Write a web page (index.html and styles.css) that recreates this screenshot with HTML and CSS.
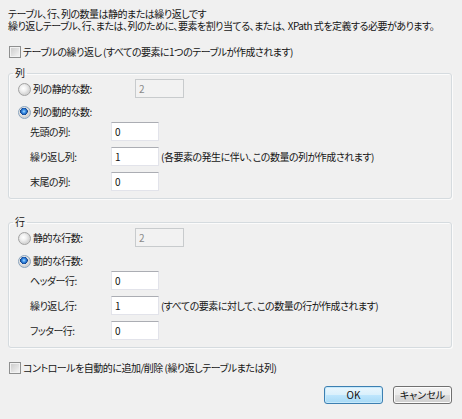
FILE: index.html
```html
<!DOCTYPE html>
<html lang="ja">
<head>
<meta charset="utf-8">
<link rel="stylesheet" href="styles.css">
</head>
<body>
<div class="dialog">
  <p class="intro">テーブル、行、列の数量は静的または繰り返しです<br>繰り返しテーブル、行、または、列のために、要素を割り当てる、または、 XPath 式を定義する必要があります。</p>

  <label class="check-row first">
    <input type="checkbox" class="checkbox">
    <span>テーブルの繰り返し (すべての要素に1つのテーブルが作成されます)</span>
  </label>

  <fieldset class="group">
    <legend>列</legend>
    <div class="group-body">
      <div class="radio-row">
        <input type="radio" class="radio" name="col">
        <span class="radio-label">列の静的な数:</span>
        <input type="text" class="textbox" value="2" disabled>
      </div>
      <div class="radio-row second">
        <input type="radio" class="radio" name="col" checked>
        <span class="radio-label">列の動的な数:</span>
      </div>
      <div class="field-row first-field">
        <span class="field-label">先頭の列:</span>
        <input type="text" class="textbox" value="0">
      </div>
      <div class="field-row">
        <span class="field-label">繰り返し列:</span>
        <input type="text" class="textbox" value="1">
        <span class="desc">(各要素の発生に伴い、この数量の列が作成されます)</span>
      </div>
      <div class="field-row">
        <span class="field-label">末尾の列:</span>
        <input type="text" class="textbox" value="0">
      </div>
    </div>
  </fieldset>

  <fieldset class="group group-rows">
    <legend>行</legend>
    <div class="group-body">
      <div class="radio-row">
        <input type="radio" class="radio" name="row">
        <span class="radio-label">静的な行数:</span>
        <input type="text" class="textbox" value="2" disabled>
      </div>
      <div class="radio-row second">
        <input type="radio" class="radio" name="row" checked>
        <span class="radio-label">動的な行数:</span>
      </div>
      <div class="field-row first-field">
        <span class="field-label">ヘッダー行:</span>
        <input type="text" class="textbox" value="0">
      </div>
      <div class="field-row">
        <span class="field-label">繰り返し行:</span>
        <input type="text" class="textbox" value="1">
        <span class="desc">(すべての要素に対して、この数量の行が作成されます)</span>
      </div>
      <div class="field-row">
        <span class="field-label">フッター行:</span>
        <input type="text" class="textbox" value="0">
      </div>
    </div>
  </fieldset>

  <label class="check-row last">
    <input type="checkbox" class="checkbox">
    <span>コントロールを自動的に追加/削除 (繰り返しテーブルまたは列)</span>
  </label>

  <div class="buttons">
    <button class="btn btn-default">OK</button>
    <button class="btn">キャンセル</button>
  </div>
</div>
</body>
</html>
```

FILE: styles.css
```css
html, body {
  margin: 0;
  padding: 0;
}

body {
  width: 462px;
  height: 419px;
  overflow: hidden;
  background: #f0f0f0;
  color: #151515;
  font-family: "Noto Sans CJK JP", "Noto Sans", sans-serif;
  font-size: 10px;
  line-height: 12px;
  font-feature-settings: "palt";
  letter-spacing: -0.5px;
}

.dialog {
  padding: 8px 10px 0 8px;
}

.intro {
  margin: 0;
  white-space: nowrap;
}

.check-row {
  display: flex;
  align-items: center;
  height: 13px;
}

.check-row.first {
  margin-top: 13px;
}

.check-row.last {
  margin-top: 13px;
}

.checkbox {
  appearance: none;
  -webkit-appearance: none;
  width: 12px;
  height: 12px;
  margin: 0 2px 0 1px;
  border: 1px solid #8e8f8f;
  background: linear-gradient(135deg, #c9c9c9 0%, #e2e2e2 55%, #f7f7f7 100%);
  box-shadow: inset 0 0 0 1px #f2f2f2;
  flex: none;
}

.group {
  margin: 9px 0 0 0;
  padding: 0;
  border: 1px solid #d5dbdf;
  border-radius: 3px;
  box-shadow: inset 1px 1px 0 #fbfbfb, 1px 1px 0 #fbfbfb;
  min-width: 0;
}

.group-rows {
  margin-top: 17px;
}

.group legend {
  margin-left: 4px;
  padding: 0 2px;
  line-height: 12px;
}

.group-body {
  padding: 0 0 7px 9px;
}

.radio-row,
.field-row {
  display: flex;
  align-items: center;
  height: 19px;
}

.radio-row.second {
  margin-top: 4px;
}

.field-row {
  padding-left: 12px;
  margin-top: 6px;
}

.field-row.first-field {
  margin-top: 1px;
}

.radio {
  appearance: none;
  -webkit-appearance: none;
  width: 13px;
  height: 13px;
  margin: 0;
  border-radius: 50%;
  border: 1px solid #a2a2a2;
  background: radial-gradient(circle at 40% 40%, #ffffff 0, #f0f0f0 3px, #d6d6d6 6px);
  box-sizing: border-box;
  flex: none;
  position: relative;
  top: 1px;
}

.radio:checked {
  border-color: #8aa4be;
  background:
    radial-gradient(circle at 45% 40%, #a9dcff 0, #3f93e8 1.6px, #1b5db5 3px, #123f80 3.6px, rgba(0,0,0,0) 3.9px),
    radial-gradient(circle at 40% 40%, #ffffff 0, #eaeaea 3px, #d2d2d2 6px);
}

.radio-label {
  width: 102px;
  margin-left: 2px;
  flex: none;
}

.field-label {
  width: 81px;
  flex: none;
  color: #222;
}

.textbox {
  width: 48px;
  height: 19px;
  box-sizing: border-box;
  margin: 0;
  padding: 0 3px;
  border: 1px solid #e2e3ea;
  border-top-color: #abadb3;
  background: #ffffff;
  font: inherit;
  color: #111;
  flex: none;
}

.textbox:disabled {
  width: 49px;
  border: 1px solid #c8cbcd;
  background: #f2f2f2;
  color: #8a8a8a;
}

.desc {
  margin-left: 2px;
  white-space: nowrap;
}

.buttons {
  display: flex;
  justify-content: flex-end;
  gap: 10px;
  margin-top: 12px;
}

.btn {
  width: 59px;
  height: 18px;
  box-sizing: border-box;
  margin: 0;
  padding: 0;
  border: 1px solid #707070;
  border-radius: 3px;
  background: linear-gradient(#f2f2f2 0%, #ebebeb 50%, #dddddd 51%, #cfcfcf 100%);
  box-shadow: inset 0 0 0 1px #fcfcfc;
  font: inherit;
  color: #111;
}

.btn-default {
  border-color: #3c7fb1;
  background: linear-gradient(#eaf6fd 0%, #d9f0fc 50%, #bee6fd 51%, #a7d9f5 100%);
  box-shadow: inset 0 0 0 1px #c6e9fb;
}
```
